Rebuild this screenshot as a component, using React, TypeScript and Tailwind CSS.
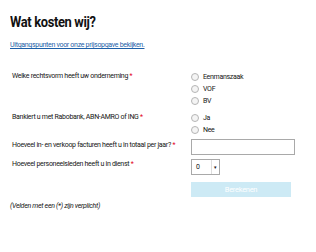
export default function App() {
  const radio = (label: string) => (
    <label className="flex items-center gap-[4px] h-[12px]">
      <span className="w-[8px] h-[8px] rounded-full border border-[#b5b5b5] bg-[#f4f4f4]" />
      <span>{label}</span>
    </label>
  );

  return (
    <div className="w-[316px] h-[252px] bg-white text-[#151515] px-[10px] pt-[14px] font-['Roboto',sans-serif]">
      <h1 className="text-[15px] font-bold leading-[16px] tracking-[-0.4px] text-[#111] origin-left scale-x-[0.86]">Wat kosten wij?</h1>
      <a href="#" className="block mt-[11px] text-[7px] leading-[9px] tracking-[-0.3px] text-[#1d5fa8] underline">
        Uitgangspunten voor onze prijsopgave bekijken.
      </a>

      <div className="mt-[21px] text-[7px] leading-[9px] tracking-[-0.3px]">
        {/* Rechtsvorm */}
        <div className="flex">
          <div className="w-[181px] pl-[2px] pt-[1px]">
            Welke rechtsvorm heeft uw onderneming <span className="text-[#e2001a]">*</span>
          </div>
          <div className="flex flex-col">
            {radio("Eenmanszaak")}
            {radio("VOF")}
            {radio("BV")}
          </div>
        </div>

        {/* Bank */}
        <div className="flex mt-[5px]">
          <div className="w-[181px] pl-[2px] pt-[1px]">
            Bankiert u met Rabobank, ABN-AMRO of ING <span className="text-[#e2001a]">*</span>
          </div>
          <div className="flex flex-col">
            {radio("Ja")}
            {radio("Nee")}
          </div>
        </div>

        {/* Facturen */}
        <div className="flex mt-[3px] items-start">
          <div className="w-[181px] pl-[2px] pt-[2px]">
            Hoeveel in- en verkoop facturen heeft u in totaal per jaar? <span className="text-[#e2001a]">*</span>
          </div>
          <input className="w-[104px] h-[16px] border border-[#a9a9a9] outline-none" />
        </div>

        {/* Personeel */}
        <div className="flex mt-[4px] items-start">
          <div className="w-[181px] pl-[2px] pt-[1px]">
            Hoeveel personeelsleden heeft u in dienst <span className="text-[#e2001a]">*</span>
          </div>
          <div className="w-[29px] h-[16px] border border-[#a9a9a9] flex items-center justify-between pl-[4px]">
            <span>0</span>
            <span className="h-full w-[8px] border-l border-[#ddd] flex items-center justify-center text-[5px]">▾</span>
          </div>
        </div>

        <div className="flex mt-[7px]">
          <div className="w-[181px]" />
          <button className="w-[100px] h-[15px] bg-[#cdeaf5] text-white text-[7.5px]">Berekenen</button>
        </div>

        <p className="mt-[5px] italic">(Velden met een (*) zijn verplicht)</p>
      </div>
    </div>
  );
}
